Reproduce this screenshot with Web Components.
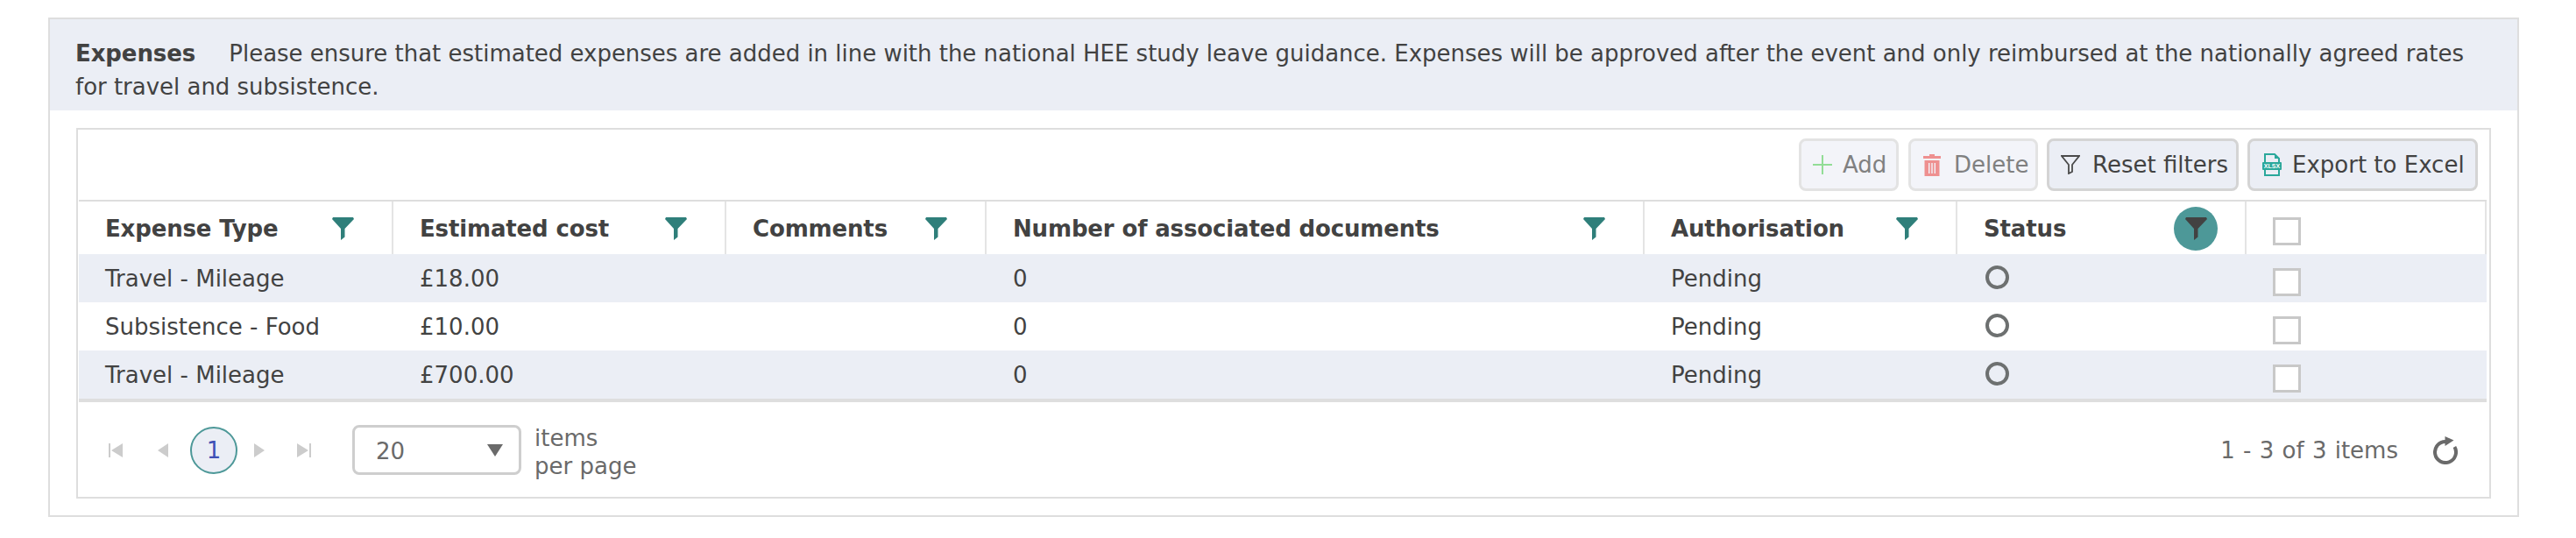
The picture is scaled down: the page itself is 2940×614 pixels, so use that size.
<!DOCTYPE html>
<html lang="en">
<head>
<meta charset="utf-8">
<title>Expenses</title>
<style>
    html, body { margin: 0; background: #fff; }
    body { font: 26px/38px "DejaVu Sans", sans-serif; color: #424242; }
</style>
</head>
<body>
<expense-panel>
    <span slot="title">Expenses</span>
    Please ensure that estimated expenses are added in line with the national HEE study leave guidance. Expenses will be approved after the event and only reimbursed at the nationally agreed rates for travel and subsistence.
    <expense-grid slot="content"></expense-grid>
</expense-panel>

<script>
'use strict';

const FUNNEL = 'M1 0H24L25 2L14.5 13V22.5L10 26V13L0 2Z';

class ExpensePanel extends HTMLElement {
    constructor() {
        super();
        let shadowRoot = this.attachShadow({mode: 'open'});
        shadowRoot.innerHTML = `
            <style>
                :host{
                    display: block;
                    box-sizing: border-box;
                    width: 2820px;
                    height: 570px;
                    margin: 20px 0 0 55px;
                    border: 2px solid #dedede;
                }
                .heading{
                    background: #ebeef5;
                    height: 104px;
                    box-sizing: border-box;
                    padding: 20px 29px 0;
                    letter-spacing: -0.02px;
                }
                .title{
                    font-weight: 700;
                    letter-spacing: -0.1px;
                    margin-right: 30px;
                }
                .content{
                    padding: 20px 30px 0 30px;
                }
            </style>
            <div class="heading"><span class="title"><slot name="title"></slot></span><slot></slot></div>
            <div class="content"><slot name="content"></slot></div>
        `;
    }
}

class ToolButton extends HTMLElement {
    constructor() {
        super();
        let shadowRoot = this.attachShadow({mode: 'open'});
        shadowRoot.innerHTML = `
            <style>
                :host{
                    display: inline-flex;
                    align-items: center;
                    box-sizing: border-box;
                    height: 60px;
                    padding: 0 0 0 var(--pad, 14px);
                    gap: var(--gap, 13px);
                    border: 3px solid #d4d4d4;
                    border-radius: 8px;
                    background: #ebeef5;
                    color: #424242;
                    white-space: nowrap;
                }
                :host([disabled]){
                    border-color: #e3e3e3;
                    background: #f3f4f9;
                    color: #808080;
                }
                ::slotted(svg){
                    display: block;
                    flex: none;
                }
            </style>
            <slot name="icon"></slot><slot></slot>
        `;
    }
}

class FilterIcon extends HTMLElement {
    constructor() {
        super();
        let shadowRoot = this.attachShadow({mode: 'open'});
        shadowRoot.innerHTML = `
            <style>
                :host{
                    display: flex;
                    align-items: center;
                    justify-content: center;
                    width: 50px;
                    height: 50px;
                    border-radius: 50%;
                    color: #2f7f7a;
                }
                :host([active]){
                    background: #4d9898;
                    color: #424242;
                }
                svg{ display: block; }
            </style>
            <svg width="25" height="26" viewBox="0 0 25 26"><path fill="currentColor" d="${FUNNEL}"/></svg>
        `;
    }
}

class ExpenseCheck extends HTMLElement {
    constructor() {
        super();
        let shadowRoot = this.attachShadow({mode: 'open'});
        shadowRoot.innerHTML = `
            <style>
                :host{
                    display: block;
                    box-sizing: border-box;
                    width: 32px;
                    height: 32px;
                    border: 3px solid #c8c8c8;
                    background: #fff;
                }
            </style>
        `;
    }
}

class ExpenseGrid extends HTMLElement {
    constructor() {
        super();
        let shadowRoot = this.attachShadow({mode: 'open'});
        let columns = ['Expense Type', 'Estimated cost', 'Comments', 'Number of associated documents', 'Authorisation', 'Status'];
        let rows = [
            ['Travel - Mileage', '£18.00', '', '0', 'Pending'],
            ['Subsistence - Food', '£10.00', '', '0', 'Pending'],
            ['Travel - Mileage', '£700.00', '', '0', 'Pending']
        ];
        let head = columns.map((name, i) => `
            <div class="th"><span>${name}</span><filter-icon ${i === 5 ? 'active' : ''}></filter-icon></div>
        `).join('');
        let body = rows.map(row => `
            <div class="tr">
                ${row.map(text => `<div class="td">${text}</div>`).join('')}
                <div class="td"><span class="ring"></span></div>
                <div class="td"><expense-check></expense-check></div>
            </div>
        `).join('');
        shadowRoot.innerHTML = `
            <style>
                :host{
                    display: block;
                    box-sizing: border-box;
                    height: 423px;
                    border: 2px solid #dedede;
                }
                .toolbar{
                    display: flex;
                    justify-content: flex-end;
                    gap: 10px;
                    height: 80px;
                    box-sizing: border-box;
                    padding: 10px 13px 0 0;
                }
                .add{ --pad: 12px; --gap: 11px; width: 114px; margin-right: 1px; }
                .delete{ --pad: 14px; --gap: 15px; width: 148px; }
                .reset{ --pad: 13px; --gap: 14px; width: 219px; }
                .export{ --pad: 14px; --gap: 12px; width: 263px; }
                .table{
                    margin: 0 3px 0 1px;
                    border-top: 2px solid #dedede;
                    border-bottom: 4px solid #dedede;
                }
                .head, .tr{
                    display: grid;
                    grid-template-columns: 359px 380px 297px 751px 357px 330px 1fr;
                }
                .head{ height: 60px; }
                .tr{ height: 55px; }
                .tr:nth-child(even){ background: #ebeef5; }
                .th{
                    display: flex;
                    align-items: center;
                    justify-content: space-between;
                    box-sizing: border-box;
                    padding: 1px 31px 0 30px;
                    font-weight: 700;
                    letter-spacing: -0.15px;
                    border-right: 2px solid #e4e4e4;
                }
                .th.box{
                    padding: 8px 0 0 30px;
                    justify-content: flex-start;
                }
                .td{
                    display: flex;
                    align-items: center;
                    box-sizing: border-box;
                    padding: 0 0 0 30px;
                    white-space: nowrap;
                }
                .td:last-child{ padding: 9px 0 0 30px; }
                .ring{
                    display: block;
                    box-sizing: border-box;
                    width: 27px;
                    height: 27px;
                    margin-left: 2px;
                    margin-bottom: 2px;
                    border: 4px solid #6d7070;
                    border-radius: 50%;
                }
            </style>
            <div class="toolbar">
                <tool-button class="add" disabled>
                    <svg slot="icon" width="24" height="24" viewBox="0 0 24 24"><path d="M12 1V23M1 12H23" stroke="#92dd96" stroke-width="2" fill="none"/></svg>Add
                </tool-button>
                <tool-button class="delete" disabled>
                    <svg slot="icon" width="20" height="25" viewBox="0 0 20 25"><path fill="#ee9090" d="M7 0H13V2H20V5H0V2H7ZM1.5 7H18.5V25H1.5ZM6 10V22H7.4V10ZM9.3 10V22H10.7V10ZM12.6 10V22H14V10Z" fill-rule="evenodd"/></svg>Delete
                </tool-button>
                <tool-button class="reset">
                    <svg slot="icon" width="22" height="22" viewBox="0 0 22 22"><path d="M1 1H21L13 11V19L9 21V11Z" fill="none" stroke="#4a4a4a" stroke-width="1.8"/></svg>Reset filters
                </tool-button>
                <tool-button class="export">
                    <svg slot="icon" width="22" height="26" viewBox="0 0 22 26"><path d="M3 10V1H14L19 6V10M3 19V25H19V19" fill="none" stroke="#2aa89b" stroke-width="2"/><path d="M14 1V6H19Z" fill="#2aa89b"/><rect y="10" width="22" height="9" rx="1" fill="#2aa89b"/><text x="11" y="17.2" text-anchor="middle" font-family="Liberation Sans" font-size="7" font-weight="700" fill="#fff">XLSX</text></svg>Export to Excel
                </tool-button>
            </div>
            <div class="table">
                <div class="head">${head}<div class="th box"><expense-check></expense-check></div></div>
                ${body}
            </div>
            <expense-pager></expense-pager>
        `;
    }
}

class ExpensePager extends HTMLElement {
    constructor() {
        super();
        let shadowRoot = this.attachShadow({mode: 'open'});
        shadowRoot.innerHTML = `
            <style>
                :host{
                    display: flex;
                    align-items: center;
                    box-sizing: border-box;
                    height: 108px;
                    padding: 1px 0 0 16px;
                    color: #6a6a6a;
                    font-size: 26px;
                    line-height: 32px;
                }
                .nav{
                    display: grid;
                    grid-template-columns: 54px 53px 64px 40px 61px;
                    align-items: center;
                    justify-items: center;
                    margin-right: 25px;
                }
                .nav svg{ display: block; }
                .page{
                    box-sizing: border-box;
                    width: 54px;
                    height: 54px;
                    border: 2px solid #4d9898;
                    border-radius: 50%;
                    background: #ebeef5;
                    color: #3f51b5;
                    text-align: center;
                    line-height: 50px;
                }
                .size{
                    display: flex;
                    align-items: center;
                    justify-content: space-between;
                    box-sizing: border-box;
                    width: 193px;
                    height: 57px;
                    padding: 2px 18px 0 24px;
                    margin-right: 15px;
                    border: 3px solid #cecece;
                    border-radius: 8px;
                    background: #fff;
                }
                .size svg{ margin-top: -2px; }
                .label{ margin-top: 4px; }
                .info{ margin: 1px 0 0 auto; word-spacing: 1px; }
                .refresh{ display: block; margin: 0 36px 0 40px; }
            </style>
            <div class="nav">
                <svg width="16" height="16" viewBox="0 0 16 16"><path fill="#cccccc" d="M0 0H2V16H0ZM16 0V16L3 8Z"/></svg>
                <svg width="12" height="16" viewBox="0 0 12 16"><path fill="#cccccc" d="M12 0V16L0 8Z"/></svg>
                <div class="page">1</div>
                <svg width="12" height="16" viewBox="0 0 12 16"><path fill="#cccccc" d="M0 0V16L12 8Z"/></svg>
                <svg width="16" height="16" viewBox="0 0 16 16"><path fill="#cccccc" d="M0 0V16L13 8ZM14 0H16V16H14Z"/></svg>
            </div>
            <div class="size">20<svg width="18" height="14" viewBox="0 0 18 14"><path fill="#6a6a6a" d="M0 0H18L9 14Z"/></svg></div>
            <div class="label">items<br>per page</div>
            <div class="info">1 - 3 of 3 items</div>
            <svg class="refresh" width="28" height="32" viewBox="0 0 28 32"><path d="M14 6A12 12 0 1 0 24.4 12" fill="none" stroke="#6a6a6a" stroke-width="4"/><path fill="#6a6a6a" d="M13.5 0L23.5 4.5L13.5 11Z"/></svg>
        `;
    }
}

customElements.define('filter-icon', FilterIcon);
customElements.define('expense-check', ExpenseCheck);
customElements.define('tool-button', ToolButton);
customElements.define('expense-pager', ExpensePager);
customElements.define('expense-grid', ExpenseGrid);
customElements.define('expense-panel', ExpensePanel);
</script>
</body>
</html>
